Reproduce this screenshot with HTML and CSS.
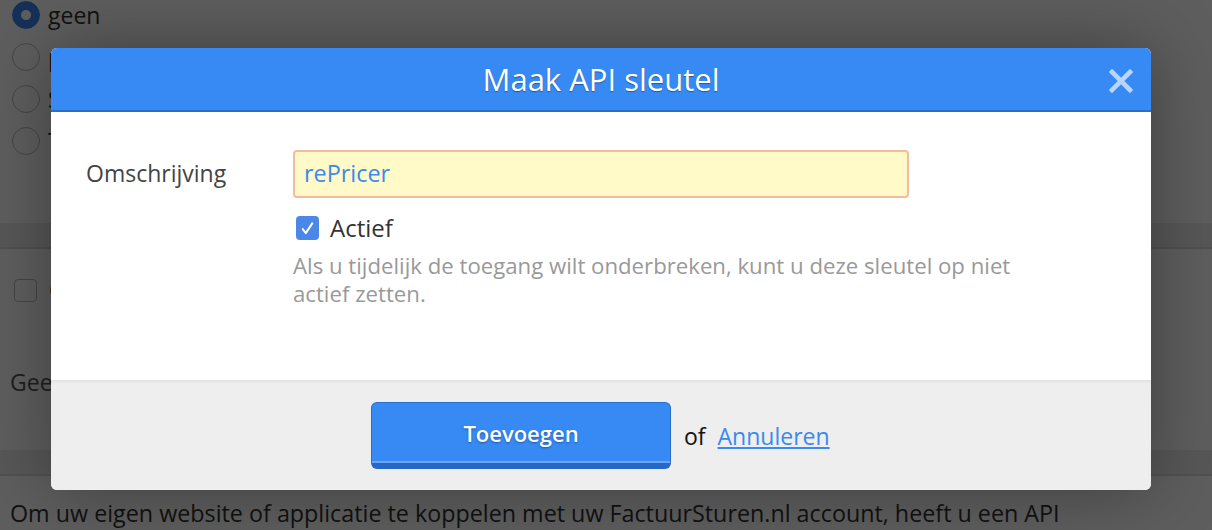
FILE: index.html
```html
<!DOCTYPE html>
<html lang="nl">
<head>
<meta charset="utf-8">
<title>Maak API sleutel</title>
<link rel="stylesheet" href="styles.css">
</head>
<body>
<div class="page">
  <ul class="radios">
    <li><span class="radio checked"></span>geen</li>
    <li><span class="radio"></span>per week (maandag)</li>
    <li><span class="radio"></span>Standaard</li>
    <li><span class="radio"></span>Totaal</li>
  </ul>
  <div class="band"></div>
  <div class="section">
    <div class="check-row"><span class="box"></span>Gebruik API</div>
    <p class="muted">Geen API sleutels gevonden.</p>
  </div>
  <div class="band"></div>
  <p class="intro">Om uw eigen website of applicatie te koppelen met uw FactuurSturen.nl account, heeft u een API sleutel nodig.</p>
</div>

<div class="overlay"></div>

<div class="modal">
  <div class="modal-header">
    <h1>Maak API sleutel</h1>
    <span class="close"><svg viewBox="0 0 26 26" width="26" height="26"><path d="M4 4L22 22M22 4L4 22" fill="none" stroke="#b8d5fb" stroke-width="4.6" stroke-linecap="square"/></svg></span>
  </div>
  <div class="modal-body">
    <div class="field">
      <label class="label">Omschrijving</label>
      <div class="control">
        <div class="input">rePricer</div>
        <div class="check">
          <span class="checkbox"><svg viewBox="0 0 24 24" width="19" height="19"><path d="M6 12.8l3.9 5L18 5.5" fill="none" stroke="#fff" stroke-width="2.5" stroke-linecap="round" stroke-linejoin="round"/></svg></span>
          <span class="check-label">Actief</span>
        </div>
        <p class="help">Als u tijdelijk de toegang wilt onderbreken, kunt u deze sleutel op niet actief zetten.</p>
      </div>
    </div>
  </div>
  <div class="modal-footer">
    <span class="btn">Toevoegen</span>
    <span class="or">of</span>
    <a class="cancel" href="#">Annuleren</a>
  </div>
</div>
</body>
</html>
```

FILE: styles.css
```css
* { box-sizing: border-box; }
html, body { margin: 0; padding: 0; }
body {
  font-family: "Open Sans", "Noto Sans", sans-serif;
  background: #ffffff;
  color: #333;
  width: 1212px;
  height: 530px;
  overflow: hidden;
  position: relative;
}
.page { height: 530px; overflow: hidden; }
.radios { list-style: none; margin: -6px 0 0 0; padding: 0 0 0 12px; }
.radios li {
  display: flex;
  align-items: center;
  height: 42px;
  font-size: 23px;
  color: #333;
  gap: 8px;
}
.radio {
  width: 28px; height: 28px;
  border-radius: 50%;
  border: 1.5px solid #bbb;
  background: #fff;
  flex: none;
}
.radio.checked {
  border-color: #3a86ee;
  background: radial-gradient(circle, #fff 0 4.5px, #3a86ee 5.5px);
}
.band {
  height: 26px;
  background: #ebebeb;
  border-bottom: 2px solid #d8d8d8;
}
.radios + .band { margin-top: 61px; }
.section { padding: 25px 10px 0 14px; height: 201px; }
.check-row { display: flex; align-items: center; gap: 12px; font-size: 23px; }
.box { width: 23px; height: 23px; border: 1.5px solid #bbb; border-radius: 4px; background: #fff; flex: none; }
.muted { margin: 60px 0 0 -4px; font-size: 23px; color: #555; }
.intro { margin: 22px 0 0 10px; font-size: 23.3px; line-height: 30px; color: #333; width: 1078px; }

.overlay {
  position: absolute;
  inset: 0;
  background: rgba(0, 0, 0, 0.63);
}

.modal {
  position: absolute;
  left: 51px;
  top: 48px;
  width: 1100px;
  height: 442px;
  border-radius: 6px;
  overflow: hidden;
  background: #fff;
  box-shadow: 0 0 70px rgba(0, 0, 0, 0.35);
  display: flex;
  flex-direction: column;
}
.modal-header {
  height: 64px;
  background: #3789f4;
  border-bottom: 2px solid #2a6dcb;
  display: flex;
  align-items: center;
  justify-content: center;
  position: relative;
  flex: none;
}
.modal-header h1 {
  margin: 0;
  color: #fff;
  font-size: 31px;
  font-weight: 500;
  text-shadow: 0 1px 1px rgba(0, 0, 0, 0.35);
}
.close {
  position: absolute;
  right: 17px;
  top: 20px;
  width: 26px;
  height: 26px;
  display: block;
}
.close svg { display: block; }
.modal-body {
  flex: 1;
  padding: 38px 35px 0 35px;
}
.field { display: flex; }
.label {
  width: 207px;
  flex: none;
  font-size: 23px;
  color: #444;
  padding-top: 7px;
}
.control { width: 616px; }
.input {
  height: 48px;
  background: #fffac8;
  border: 2px solid #f4bb9d;
  border-radius: 4px;
  padding: 5px 9px;
  font-size: 23.4px;
  color: #3a8af0;
}
.check {
  display: flex;
  align-items: center;
  gap: 11px;
  margin-top: 15px;
  margin-left: 3px;
}
.checkbox {
  width: 23px; height: 24px;
  border-radius: 4px;
  background: #4a87e8;
  display: flex;
  align-items: center;
  justify-content: center;
  flex: none;
}
.check-label { font-size: 24px; color: #333; line-height: 30px; }
.help {
  margin: 9px 0 0 0;
  font-size: 22.2px;
  line-height: 28px;
  color: #999;
  width: 772px;
}
.modal-footer {
  height: 110px;
  flex: none;
  background: #eeeeee;
  box-shadow: inset 0 3px 3px -1px rgba(0, 0, 0, 0.06);
  display: flex;
  align-items: center;
  padding-left: 320px;
  padding-top: 1px;
}
.btn {
  width: 300px;
  height: 67px;
  background: #3789f4;
  border: 1px solid #2a6dcb;
  border-bottom: 6px solid #2967c6;
  border-radius: 6px;
  box-shadow: inset 0 -2px 0 rgba(255,255,255,0.25);
  color: #fff;
  font-size: 22px;
  font-weight: 600;
  text-shadow: 0 1px 2px rgba(0, 0, 0, 0.35);
  display: flex;
  align-items: center;
  justify-content: center;
}
.or { margin-left: 13px; font-size: 23px; color: #111; }
.cancel { margin-left: 12px; font-size: 23px; color: #3a8af0; text-decoration: underline; }
```
